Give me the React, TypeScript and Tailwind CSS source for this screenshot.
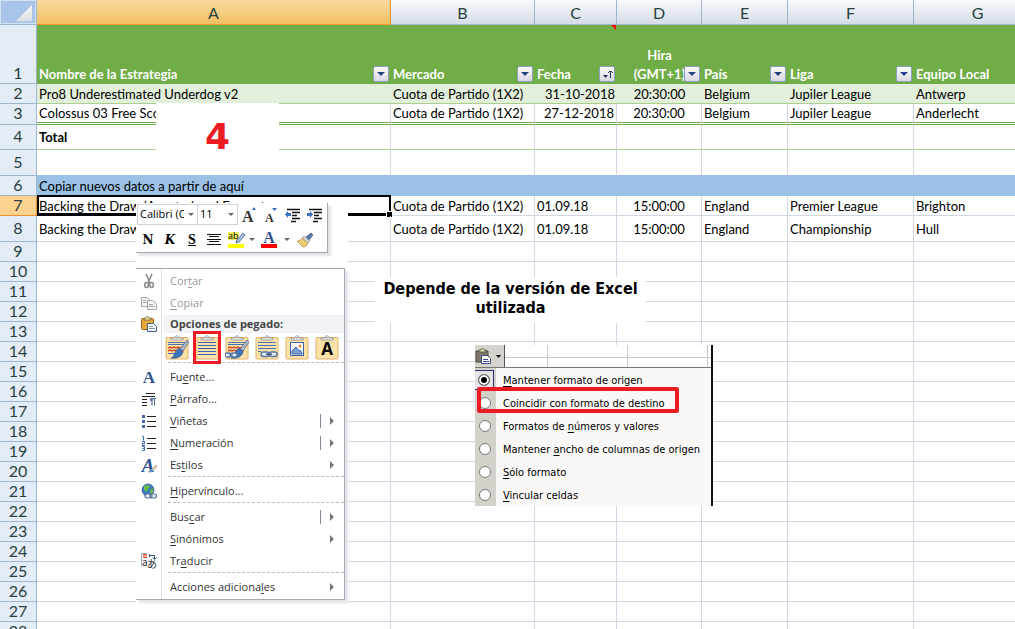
import React from 'react';

const rows = [
  { n: 2, h: 'h-5', name: 'Pro8 Underestimated Underdog v2', cells: ['Cuota de Partido (1X2)', '31-10-2018', '20:30:00', 'Belgium', 'Jupiler League', 'Antwerp'] },
  { n: 3, h: 'h-[21px]', name: 'Colossus 03 Free Score', cells: ['Cuota de Partido (1X2)', '27-12-2018', '20:30:00', 'Belgium', 'Jupiler League', 'Anderlecht'] },
  { n: 4, h: 'h-[25px]', name: 'Total', cells: [] },
  { n: 5, h: 'h-[26px]', name: '', cells: [] },
  { n: 6, h: 'h-5', name: 'Copiar nuevos datos a partir de aquí', cells: [] },
  { n: 7, h: 'h-5', name: 'Backing the Draw (Asentarhead Fronset', cells: ['Cuota de Partido (1X2)', '01.09.18', '15:00:00', 'England', 'Premier League', 'Brighton'] },
  { n: 8, h: 'h-[26px]', name: 'Backing the Draw', cells: ['Cuota de Partido (1X2)', '01.09.18', '15:00:00', 'England', 'Championship', 'Hull'] },
];

for (let n = 9; n <= 28; n++) {
  rows.push({ n, h: 'h-5', name: '', cells: [] });
}

const headers = ['Nombre de la Estrategia', 'Mercado', 'Fecha', 'Hira (GMT+1)', 'País', 'Liga', 'Equipo Local'];

function cellStyle(n: number) {
  if (n === 2) return 'bg-[#e2efda] border-b border-b-[#a9d08e]';
  if (n === 3) return 'border-r border-r-[#d0d7e5] border-b-3 border-double border-b-[#70ad47]';
  if (n === 4) return 'border-r border-r-[#d0d7e5] border-b border-b-[#a9d08e]';
  if (n === 5) return 'border-r border-r-[#d0d7e5] border-b border-b-[#9bc2e6]';
  if (n === 6) return 'bg-[#9bc2e6] border-b border-b-[#9bc2e6]';
  return 'border-r border-b border-[#d0d7e5]';
}

function FilterButton({ label, sorted }: { label: string; sorted?: boolean }) {
  return (
    <button
      type="button"
      aria-label={`Filtrar ${label}`}
      className="absolute right-0.5 bottom-0.5 h-4 w-4 rounded-xs border border-[#8f9fc4] bg-linear-to-b from-[#fcfcfc] to-[#d6d9e0]"
    >
      <svg viewBox="0 0 14 14" className="h-[14px] w-[14px]">
        {sorted ? (
          <g fill="#25315c">
            <path d="M3 8h5L5.500 11z" />
            <path d="M10 4h1v7h-1zM9 4h3v1H9zM8 5h1v1H8zM12 5h1v1h-1z" />
          </g>
        ) : (
          <path d="M3 5h8L7 9z" fill="#25407e" />
        )}
      </svg>
    </button>
  );
}

function Sheet() {
  return (
    <table className="w-full min-w-[1042px] table-fixed border-separate border-spacing-0 text-[13px] leading-[18px] text-black">
      <colgroup>
        <col className="w-[37px]" />
        <col className="w-[354px]" />
        <col className="w-36" />
        <col className="w-[82px]" />
        <col className="w-[85px]" />
        <col className="w-[86px]" />
        <col className="w-[126px]" />
        <col />
      </colgroup>
      <thead>
        <tr className="h-[25px] text-base leading-[22px] text-[#27413e]">
          <th className="border-r border-b border-[#9eb6ce] bg-[#a9c4e9] p-0 leading-none shadow-[inset_1px_1px_0_#d3e2f5,inset_-1px_-1px_0_#d3e2f5]">
            <svg viewBox="0 0 36 24" className="h-6 w-9">
              <defs>
                <linearGradient id="corner" x1="0" y1="0" x2="0" y2="1">
                  <stop offset="0" stopColor="#fafafa" />
                  <stop offset="1" stopColor="#dadde2" />
                </linearGradient>
              </defs>
              <path d="M32 5v16H16z" fill="url(#corner)" />
            </svg>
          </th>
          {['A', 'B', 'C', 'D', 'E', 'F', 'G'].map((c) => (
            <th
              key={c}
              className={
                c === 'A'
                  ? 'border-r border-b border-[#f29436] bg-linear-to-b from-[#f9d99f] to-[#f1c15f] p-0 pt-0.5 font-normal'
                  : 'border-r border-b border-[#9eb6ce] bg-linear-to-b from-[#f8fafc] to-[#d5dce8] p-0 pt-0.5 font-normal'
              }
            >
              {c}
            </th>
          ))}
        </tr>
        <tr className="h-[59px]">
          <th className="border-r border-b border-[#9eb6ce] bg-[#e4ecf7] p-0 align-bottom text-base leading-5 font-normal text-[#27413e]">1</th>
          {headers.map((h, i) => (
            <th
              key={h}
              className={`relative bg-[#70ad47] p-0 px-0.5 align-bottom leading-[19px] font-bold text-white ${i === 3 ? 'text-center' : 'text-left'}`}
            >
              {i === 3 ? <>Hira<br />(GMT+1)</> : h}
              {i < 6 && <FilterButton label={h} sorted={i === 2} />}
              {i === 2 && (
                <svg viewBox="0 0 5 5" className="absolute top-0 right-px h-[5px] w-[5px]">
                  <path d="M0 0h5v5z" fill="#f00" />
                </svg>
              )}
            </th>
          ))}
        </tr>
      </thead>
      <tbody>
        {rows.map((r) => (
          <tr key={r.n} className={r.h}>
            <th
              className={`border-r border-b p-0 pb-0.5 text-base leading-4 font-normal text-[#27413e] ${r.n === 7 ? 'border-[#f29436] bg-[#fdd28f]' : 'border-[#9eb6ce] bg-[#e4ecf7]'}`}
            >
              {r.n}
            </th>
            <td className={`relative p-0 px-0.5 whitespace-nowrap ${cellStyle(r.n)} ${r.n === 4 ? 'font-bold' : ''}`}>
              {r.name}
              {r.n === 7 && (
                <>
                  <span className="absolute -inset-px left-0 border-2 border-b-3 border-black" />
                  <span className="absolute -right-0.5 -bottom-0.5 h-1.5 w-1.5 border-t border-l border-white bg-black" />
                </>
              )}
            </td>
            {[0, 1, 2, 3, 4, 5].map((i) => (
              <td
                key={i}
                className={`p-0 px-0.5 whitespace-nowrap ${cellStyle(r.n)} ${i === 1 && r.n < 5 ? 'text-right' : ''} ${i === 2 ? 'text-center' : ''}`}
              >
                {r.cells[i]}
              </td>
            ))}
          </tr>
        ))}
      </tbody>
    </table>
  );
}

function Brush() {
  return (
    <g>
      <path d="M22 5l2 2-6 9-3-2z" fill="#a9b8cc" stroke="#53657e" strokeWidth=".7" />
      <path d="M14 13l4 4c-1 5-7 7-12 6 4-1 3-7 8-10z" fill="#3c73b9" stroke="#24508b" strokeWidth=".6" />
    </g>
  );
}

function Chain() {
  return (
    <g fill="none" stroke="#5878a4" strokeWidth="1.500">
      <rect x="6" y="17" width="8" height="4.500" rx="2.200" fill="#e8eef7" />
      <rect x="14" y="17" width="8" height="4.500" rx="2.200" fill="#e8eef7" />
      <path d="M11 19.200h6" stroke="#3b5278" />
    </g>
  );
}

function Clipboard({ children }: { children: React.ReactNode }) {
  return (
    <svg viewBox="0 0 24 25" className="h-[25px] w-6">
      <rect x="1" y="2.500" width="22" height="21.500" rx="1" fill="#fce1a9" stroke="#deb46d" />
      <path d="M6 5V3h4c0-3 4-3 4 0h4v2z" fill="#f4f4f4" stroke="#8d8d8d" strokeWidth=".8" />
      <circle cx="12" cy="2.800" r=".8" fill="#777" />
      {children}
    </svg>
  );
}

const blueLines = <path d="M3 7.500h18M3 10.500h18M3 13.500h18M3 16.500h18M3 19.500h18" stroke="#3563b5" />;
const mixedLines = (
  <g fill="none">
    <path d="M3 7.500h18M3 9.500h18M3 18.500h13" stroke="#4872b8" />
    <path d="M3 13l2-1 2 1 2-1 2 1 2-1 2 1 2-1 2 1M3 16l2-1 2 1 2-1 2 1 2-1 2 1 2-1 2 1" stroke="#d5502c" strokeWidth="1.500" />
  </g>
);

const pasteOptions = [
  { label: 'Mantener formato', icon: <>{mixedLines}<Brush /></> },
  { label: 'Coincidir con destino', icon: blueLines },
  {
    label: 'Vincular y mantener formato',
    icon: (
      <>
        {mixedLines}
        <Brush />
        <g fill="#e8eef7" stroke="#5878a4" strokeWidth="1.300">
          <rect x="0" y="18" width="6" height="4" rx="2" />
          <rect x="6" y="18" width="6" height="4" rx="2" />
          <path d="M4 20h4" />
        </g>
      </>
    ),
  },
  { label: 'Vincular', icon: <><path d="M3 7.500h18M3 10.500h18M3 13.500h18M3 16.500h3" stroke="#4872b8" /><Chain /></> },
  {
    label: 'Imagen',
    icon: (
      <g>
        <rect x="5.500" y="7.500" width="13" height="13" fill="#fff" stroke="#3c62a0" />
        <path d="M7 16l4-4 3 4 1-1 2 3v1H7z" fill="#7ca2d6" stroke="#3c62a0" />
        <circle cx="15" cy="11" r="1.500" fill="#f1812d" />
      </g>
    ),
  },
  {
    label: 'Solo texto',
    icon: <text x="12" y="20" textAnchor="middle" fontSize="17" fontWeight="700" fontFamily="Open Sans, sans-serif">A</text>,
  },
];

const icons: Record<string, React.ReactNode> = {
  cut: (
    <g fill="none" stroke="#8d8d8d" strokeWidth="1.600">
      <path d="M5 1l4 9M11 1L7 10" />
      <ellipse cx="5.500" cy="12" rx="1.800" ry="2.500" />
      <ellipse cx="10.500" cy="12" rx="1.800" ry="2.500" />
    </g>
  ),
  copy: (
    <g fill="#f4f4f4" stroke="#a5a5a5">
      <path d="M.5 2.500h6l3 3v6h-9z" />
      <path d="M6.500 5.500h5l4 3v6h-9z" />
      <path d="M2 5.500h3M2 7.500h4M8 9.500h4M8 11.500h6" />
    </g>
  ),
  paste: (
    <g>
      <rect x=".5" y="2.500" width="12" height="11" rx="1" fill="#e6a93c" stroke="#98651e" />
      <path d="M3 4V2h2c0-2 3-2 3 0h2v2z" fill="#e9e39e" stroke="#6c6234" strokeWidth=".8" />
      <path d="M6.500 7.500h6l3 3v5h-9z" fill="#f5f9ff" stroke="#415c91" />
      <path d="M8 10.500h4M8 12.500h6" stroke="#7897c7" />
    </g>
  ),
  font: <text x="8" y="14" textAnchor="middle" fontSize="17" fontWeight="700" fill="#315391" fontFamily="Liberation Serif, serif">A</text>,
  paragraph: (
    <g stroke="#222" fill="none">
      <path d="M5 2.500h9M1 5.500h13M1 8.500h5M1 11.500h5M1 14.500h5" />
      <path d="M9 8a2 2 0 002 2V8zM11 7.500v7M13.500 7.500v7M10 7.500h5" stroke="#4c6591" />
    </g>
  ),
  bullets: (
    <g>
      <path d="M6 3.500h9M6 8.500h9M6 13.500h9" stroke="#222" />
      <path d="M1 2h3v3H1zM1 7h3v3H1zM1 12h3v3H1z" fill="#4868a5" />
    </g>
  ),
  numbers: (
    <g>
      <path d="M6 3.500h9M6 8.500h9M6 13.500h9" stroke="#222" />
      <path d="M1 1.500h1.500v4M1 6.500h2.500v2H1.500v2H4M1 11.500h2.500v4H1M1.500 13.500h2" fill="none" stroke="#4169b3" />
    </g>
  ),
  styles: (
    <g>
      <text x="7" y="15" textAnchor="middle" fontSize="19" fontStyle="italic" fontWeight="700" fill="#315391" fontFamily="Liberation Serif, serif">A</text>
      <path d="M15 8l1 1-4 5-2-1z" fill="#f1d59b" stroke="#68758a" strokeWidth=".5" />
      <path d="M10 12l2 1c0 2-3 3-5 2 2 0 1-2 3-3z" fill="#5891ce" />
    </g>
  ),
  link: (
    <g>
      <circle cx="7" cy="7" r="6" fill="#387abe" stroke="#31567f" strokeWidth=".7" />
      <path d="M3 3l4-1 2 2-2 2-1 3-3-2zM9 7l3-2v4l-3 2z" fill="#6db94a" />
      <g fill="#e8eff9" stroke="#576e98" strokeWidth="1.200">
        <rect x="4" y="11" width="6" height="4" rx="2" />
        <rect x="9.500" y="11" width="6" height="4" rx="2" />
        <path d="M8 13h4" />
      </g>
    </g>
  ),
  translate: (
    <g fontFamily="Noto Sans CJK JP, sans-serif" fill="#333">
      <path d="M.5 13.500v-13h5" fill="none" stroke="#98a7c0" />
      <path d="M2 1h4v1.500H2zM2 3.500h4V5H2z" fill="#db5428" />
      <path d="M9 2.500h4M13.500 2v4M8.500 1v3M11.500 4.500l2 2 2-2" fill="none" stroke="#3d587f" />
      <text x="1" y="13" fontSize="10">a</text>
      <text x="6" y="15" fontSize="10">あ</text>
    </g>
  ),
};

type Item = { pre: string; hot: string; post: string; icon?: string; disabled?: boolean; arrow?: boolean; split?: boolean };

function MenuItem({ pre, hot, post, icon, disabled, arrow, split }: Item) {
  return (
    <button type="button" disabled={disabled} className={`flex h-[22px] w-full items-center text-left ${disabled ? 'text-[#9a9a9a]' : 'text-[#333]'}`}>
      <span className="flex w-[25px] justify-center">
        {icon && <svg viewBox="0 0 16 16" className="h-4 w-4">{icons[icon]}</svg>}
      </span>
      <span className="flex-1 pl-[9px]">
        {pre}
        <u className="underline-offset-2">{hot}</u>
        {post}
      </span>
      {split && <span className="mr-[9px] h-[14px] w-px bg-[#7f8899]" />}
      {arrow && (
        <svg viewBox="0 0 4 8" className="mr-2.5 h-2 w-1">
          <path d="M0 0l4 4-4 4z" fill="#777" />
        </svg>
      )}
    </button>
  );
}

function Group({ items }: { items: Item[] }) {
  return (
    <>
      {items.map((it) => (
        <MenuItem key={it.pre + it.hot + it.post} {...it} />
      ))}
    </>
  );
}

function Separator() {
  return (
    <div className="flex h-1 items-start pl-8">
      <div className="flex-1 border-t border-dashed border-[#bcbcbc]" />
    </div>
  );
}

function ContextMenu() {
  return (
    <div className="relative w-[209px] border-t border-r border-b border-[#a3a7ae] bg-white py-px font-['Open_Sans',sans-serif] text-[11px] leading-4 shadow-[3px_3px_2px_#e4e4ea]">
      <span className="absolute top-0 bottom-0 left-[25px] w-px bg-[#dfe1e5]" />
      <Group
        items={[
          { pre: 'Cor', hot: 't', post: 'ar', icon: 'cut', disabled: true },
          { pre: '', hot: 'C', post: 'opiar', icon: 'copy', disabled: true },
        ]}
      />
      <div className="flex h-5 items-center">
        <span className="flex w-[25px] justify-center">
          <svg viewBox="0 0 16 16" className="h-4 w-4">{icons.paste}</svg>
        </span>
        <span className="ml-0.5 flex h-[18px] flex-1 items-center bg-[#f1f3f7] pl-[7px] font-bold text-[#444]">Opciones de pegado:</span>
      </div>
      <div className="flex h-7 items-start gap-1.5 pt-px pl-[29px]">
        {pasteOptions.map((o, i) => (
          <button key={o.label} type="button" aria-label={o.label} className="relative h-[25px] w-6">
            <Clipboard>{o.icon}</Clipboard>
            {i === 1 && <span className="absolute -inset-x-0.5 -inset-y-1 border-3 border-[#ed1c24]" />}
          </button>
        ))}
      </div>
      <Separator />
      <Group
        items={[
          { pre: 'Fu', hot: 'e', post: 'nte...', icon: 'font' },
          { pre: '', hot: 'P', post: 'árrafo...', icon: 'paragraph' },
          { pre: '', hot: 'V', post: 'iñetas', icon: 'bullets', arrow: true, split: true },
          { pre: '', hot: 'N', post: 'umeración', icon: 'numbers', arrow: true, split: true },
          { pre: 'Es', hot: 't', post: 'ilos', icon: 'styles', arrow: true },
        ]}
      />
      <Separator />
      <Group items={[{ pre: '', hot: 'H', post: 'ipervínculo...', icon: 'link' }]} />
      <Separator />
      <Group
        items={[
          { pre: 'Bus', hot: 'c', post: 'ar', arrow: true, split: true },
          { pre: '', hot: 'S', post: 'inónimos', arrow: true },
          { pre: 'Tr', hot: 'a', post: 'ducir', icon: 'translate' },
        ]}
      />
      <Separator />
      <Group items={[{ pre: 'Acciones adiciona', hot: 'l', post: 'es', arrow: true }]} />
    </div>
  );
}

function Caret() {
  return (
    <svg viewBox="0 0 6 3" className="h-[3px] w-1.5">
      <path d="M0 0h6L3 3z" fill="#666" />
    </svg>
  );
}

function Indent({ flip }: { flip?: boolean }) {
  return (
    <svg viewBox="0 0 16 16" className="h-4 w-4">
      <path d="M2 2.500h13M7 5.500h8M7 8.500h5M7 11.500h8M6 14.500h5" stroke="#111" strokeWidth="1.300" />
      <path d={flip ? 'M0 6h3V4l3 3.500L3 11V9H0z' : 'M6 6H3V4L0 7.500 3 11V9h3z'} fill="#3a6ec0" />
    </svg>
  );
}

function MiniToolbar() {
  return (
    <div className="w-[192px] border-r border-b border-[#a3a7ae] bg-white shadow-[3px_3px_2px_#e4e4ea]">
      <div className="flex items-center pt-px pl-px font-['Open_Sans',sans-serif] text-[11px]">
        <label className="flex h-[21px] w-[61px] items-center border border-[#cfd3da]">
          <select aria-label="Fuente" className="w-[46px] appearance-none overflow-hidden pl-0.5 whitespace-nowrap">
            <option>Calibri (Cuerpo)</option>
          </select>
          <span className="ml-1 flex"><Caret /></span>
        </label>
        <label className="flex h-[21px] w-10 items-center border border-l-0 border-[#cfd3da]">
          <select aria-label="Tamaño" className="w-7 appearance-none pl-0.5">
            <option>11</option>
          </select>
          <span className="ml-0.5 flex"><Caret /></span>
        </label>
        <button type="button" aria-label="Agrandar fuente" className="ml-1">
          <svg viewBox="0 0 16 16" className="h-4 w-4">
            <text x="0" y="15" fontSize="16" fontWeight="700" fontFamily="Liberation Serif, serif" fill="#333">A</text>
            <path d="M10 3l2-3 2 3z" fill="#3a6ec0" />
          </svg>
        </button>
        <button type="button" aria-label="Encoger fuente" className="ml-1.5">
          <svg viewBox="0 0 16 16" className="h-4 w-4">
            <text x="1" y="15" fontSize="12" fontWeight="700" fontFamily="Liberation Serif, serif" fill="#333">A</text>
            <path d="M8 1h5l-2.500 3z" fill="#3a6ec0" />
          </svg>
        </button>
        <button type="button" aria-label="Disminuir sangría" className="ml-[5px]"><Indent /></button>
        <button type="button" aria-label="Aumentar sangría" className="ml-1.5"><Indent flip /></button>
      </div>
      <div className="flex h-[27px] items-center pt-0.5 pl-1 text-sm">
        <button type="button" className="w-4 font-['DejaVu_Serif',serif] text-xs font-bold">N</button>
        <button type="button" className="ml-1.5 w-4 font-['DejaVu_Serif',serif] text-xs font-bold italic">K</button>
        <button type="button" className="ml-1.5 w-4 font-['Liberation_Serif',serif] font-bold underline">S</button>
        <button type="button" aria-label="Centrar" className="ml-1.5">
          <svg viewBox="0 0 16 16" className="h-4 w-4">
            <path d="M1 2.500h14M3 4.500h10M1 7.500h14M3 9.500h10M1 12.500h14" stroke="#111" strokeWidth="1.200" />
          </svg>
        </button>
        <button type="button" aria-label="Resaltado" className="ml-1.5 flex items-center gap-1">
          <svg viewBox="0 0 17 17" className="h-[17px] w-[17px]">
            <path d="M0 1h11v8H0z" fill="#f4f05c" />
            <text x="0" y="8" fontSize="9" fontFamily="Open Sans, sans-serif">ab</text>
            <path d="M15 2l2 2-6 7-3 1 1-3z" fill="#a9c0e1" stroke="#415c91" strokeWidth=".8" />
            <path d="M0 13h16v4H0z" fill="#ff0" />
          </svg>
          <Caret />
        </button>
        <button type="button" aria-label="Color de fuente" className="ml-1.5 flex items-center gap-1.5">
          <svg viewBox="0 0 17 17" className="h-[17px] w-[17px]">
            <text x="8" y="12" textAnchor="middle" fontSize="16" fontWeight="700" fontFamily="Liberation Serif, serif" fill="#315391">A</text>
            <path d="M0 13h16v4H0z" fill="#f00" />
          </svg>
          <Caret />
        </button>
        <button type="button" aria-label="Copiar formato" className="ml-[7px]">
          <svg viewBox="0 0 16 16" className="h-4 w-4">
            <path d="M14 1l2 2-4 5-3-3z" fill="#5979ae" stroke="#344e7d" strokeWidth=".6" />
            <path d="M7 4l6 5-2 2-6-5z" fill="#d7d9df" stroke="#777d8b" strokeWidth=".6" />
            <path d="M5 6l6 5c-1 3-3 4-5 4L0 9c2 0 4-1 5-3z" fill="#edcc7b" stroke="#a87e34" strokeWidth=".6" />
          </svg>
        </button>
      </div>
    </div>
  );
}

const pasteModes = [
  ['', 'M', 'antener formato de origen'],
  ['', 'C', 'oincidir con formato de destino'],
  ['Formatos de ', 'n', 'úmeros y valores'],
  ['Mantener ', 'a', 'ncho de columnas de origen'],
  ['', 'S', 'ólo formato'],
  ['', 'V', 'incular celdas'],
];

function PastePopup() {
  return (
    <div className="w-[238px] border-r-2 border-[#111] bg-[#f9f8f6] font-['DejaVu_Sans_Condensed','DejaVu_Sans',sans-serif] text-[11px] leading-4 text-black">
      <div className="flex h-[23px] border-b border-[#777] bg-white">
        <button type="button" aria-label="Opciones de pegado" className="flex w-[30px] items-center gap-1 border-r border-[#555] bg-[#d6d3cc]">
          <svg viewBox="0 0 17 16" className="h-4 w-[17px]">
            <path d="M1 3h12v11H1z" fill="#7e796d" stroke="#4c493f" />
            <path d="M4 4V2h2c0-2 3-2 3 0h2v2z" fill="#dcd9ac" stroke="#4c493f" strokeWidth=".8" />
            <path d="M6.500 7.500h6l3 3v5h-9z" fill="#fff" stroke="#3b4b8d" />
            <path d="M8 11.500h5M8 13.500h6" stroke="#3b4b8d" />
          </svg>
          <svg viewBox="0 0 5 3" className="h-[3px] w-[5px]">
            <path d="M0 0h5L2.500 3z" />
          </svg>
        </button>
        <div className="grid flex-1 grid-cols-[43px_80px_80px_1fr] grid-rows-[13px_9px]">
          {[0, 1, 2, 3, 4, 5, 6, 7].map((i) => (
            <span key={i} className={`border-[#c8c8c8] ${i < 4 ? 'border-b' : ''} ${i % 4 < 3 ? 'border-r' : ''}`} />
          ))}
        </div>
      </div>
      <div className="relative">
        {pasteModes.map(([pre, key, post], i) => (
          <label key={key} className="flex h-[23px] items-center">
            <span className="flex h-full w-[21px] items-center bg-[#d3d1c9]">
              <span className={`flex h-5 w-[19px] items-center justify-center ${i === 0 ? 'border border-l-0 border-[#26346f] bg-[#e3e2e4]' : ''}`}>
                <input
                  type="radio"
                  name="modo"
                  defaultChecked={i === 0}
                  className="h-3 w-3 appearance-none rounded-full border border-[#777] bg-white checked:bg-black checked:shadow-[inset_0_0_0_2px_#fff]"
                />
              </span>
            </span>
            <span className="pt-0.5 pl-[7px] whitespace-nowrap">
              {pre}
              <u className="underline-offset-2">{key}</u>
              {post}
            </span>
          </label>
        ))}
        <span className="pointer-events-none absolute top-[19px] left-0.5 h-[26px] w-[202px] rounded-xs border-4 border-[#ed1c24]" />
      </div>
    </div>
  );
}

export default function App() {
  return (
    <main className="relative h-screen overflow-hidden bg-white font-[Lato,'Liberation_Sans',sans-serif]">
      <Sheet />
      <div className="absolute top-[103px] left-[156px] flex h-[51px] w-[123px] items-end justify-center bg-white font-['DejaVu_Sans',sans-serif] text-[36px] leading-[34px] font-bold text-[#ed1c24]">
        4
      </div>
      <div className="absolute top-[203px] left-[136px] flex w-[212px] flex-col gap-[15px] bg-white pb-0.5">
        <MiniToolbar />
        <ContextMenu />
      </div>
      <p className="absolute top-[277px] left-[375px] w-[271px] bg-white pt-0.5 pb-1.5 text-center font-['DejaVu_Sans_Condensed','DejaVu_Sans',sans-serif] text-base leading-[19px] font-bold text-black">
        Depende de la versión de Excel utilizada
      </p>
      <div className="absolute top-[345px] left-[475px]">
        <PastePopup />
      </div>
    </main>
  );
}
